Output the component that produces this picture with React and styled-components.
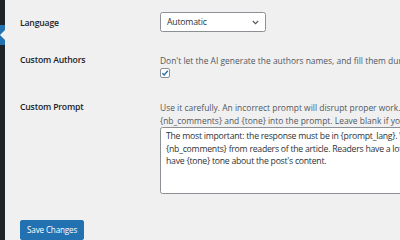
import React from "react";
import styled, { createGlobalStyle } from "styled-components";

const Global = createGlobalStyle`
  html, body { margin: 0; padding: 0; background: #f0f0f1; overflow: hidden; }
  body { width: 400px; height: 240px; font-family: "Open Sans", "Noto Sans", sans-serif; color: #1d2327; }
`;

const Layout = styled.div`
  display: flex;
  width: 400px;
  height: 240px;
  overflow: hidden;
`;

const Sidebar = styled.nav`
  flex: 0 0 5px;
  background: #1d2327;
  display: flex;
  flex-direction: column;
`;

const CurrentItem = styled.div`
  position: relative;
  margin-top: 25px;
  height: 20px;
  background: #2271b1;
  &::after {
    content: "";
    position: absolute;
    right: 0;
    top: 50%;
    margin-top: -5px;
    border: 5px solid transparent;
    border-right-color: #f0f0f1;
    border-left-width: 0;
  }
`;

const Main = styled.main`
  flex: 1;
  min-width: 0;
  padding: 12px 0 0 15px;
  display: flex;
  flex-direction: column;
`;

const Row = styled.div`
  display: grid;
  grid-template-columns: 140px 1fr;
  margin-bottom: ${(p) => p.$gap || 0}px;
`;

const Label = styled.div`
  font-size: 8.7px;
  font-weight: 600;
  letter-spacing: -0.2px;
  line-height: 13px;
  padding-top: ${(p) => p.$top || 0}px;
  white-space: nowrap;
`;

const Field = styled.div`
  display: flex;
  flex-direction: column;
  min-width: 0;
`;

const Select = styled.div`
  box-sizing: border-box;
  width: 106px;
  height: 20px;
  border: 1px solid #8c8f94;
  border-radius: 2.5px;
  background: #fff;
  display: flex;
  align-items: center;
  justify-content: space-between;
  padding: 0 6px 0 6px;
  font-size: 8.7px;
  letter-spacing: -0.2px;
  color: #2c3338;
`;

const Description = styled.p`
  margin: 0;
  font-size: 8.45px;
  line-height: 13px;
  color: #50575e;
  white-space: nowrap;
`;

const Checkbox = styled.span`
  box-sizing: border-box;
  width: 10px;
  height: 10px;
  margin-top: 1px;
  border: 1px solid #8c8f94;
  border-radius: 2px;
  background: #fff;
  display: flex;
  align-items: center;
  justify-content: center;
`;

const TextArea = styled.textarea`
  box-sizing: border-box;
  width: 400px;
  height: 67px;
  margin: 0;
  padding: 2px 5px;
  border: 1px solid #8c8f94;
  border-radius: 2.5px;
  background: #fff;
  font-family: "Open Sans", "Noto Sans", sans-serif;
  font-size: 8.7px;
  letter-spacing: -0.25px;
  line-height: 12.7px;
  color: #2c3338;
  resize: none;
  overflow: hidden;
  white-space: pre;
`;

const SaveButton = styled.button`
  align-self: flex-start;
  box-sizing: border-box;
  height: 20px;
  padding: 0 6px;
  border: 1px solid #2271b1;
  border-radius: 2px;
  background: #2271b1;
  color: #fff;
  font-family: "Open Sans", "Noto Sans", sans-serif;
  font-size: 8.1px;
  letter-spacing: -0.15px;
  line-height: 18px;
`;

const prompt =
  "The most important: the response must be in {prompt_lang}. Write a list of comments numbering\n" +
  "{nb_comments} from readers of the article. Readers have a lot of different opinions and\n" +
  "have {tone} tone about the post's content.";

export default function App() {
  return (
    <>
      <Global />
      <Layout>
        <Sidebar>
          <CurrentItem />
        </Sidebar>
        <Main>
          <Row $gap={22}>
            <Label $top={4.5}>Language</Label>
            <Field>
              <Select>
                <span>Automatic</span>
                <svg width="7" height="5" viewBox="0 0 7 5">
                  <path d="M0.8 1 L3.5 3.7 L6.2 1" fill="none" stroke="#50575e" strokeWidth="1.1" />
                </svg>
              </Select>
            </Field>
          </Row>
          <Row $gap={23}>
            <Label>Custom Authors</Label>
            <Field>
              <Description>Don't let the AI generate the authors names, and fill them during the process.</Description>
              <Checkbox>
                <svg width="8" height="8" viewBox="0 0 8 8">
                  <path d="M1.3 4.2 L3.2 6 L6.8 1.8" fill="none" stroke="#2271b1" strokeWidth="1.4" />
                </svg>
              </Checkbox>
            </Field>
          </Row>
          <Row $gap={26}>
            <Label>Custom Prompt</Label>
            <Field>
              <Description>
                Use it carefully. An incorrect prompt will disrupt proper work. You can use {"{prompt_lang}"},
                <br />
                {"{nb_comments}"} and {"{tone}"} into the prompt. Leave blank if you want to use the default.
              </Description>
              <TextArea readOnly value={prompt} />
            </Field>
          </Row>
          <SaveButton>Save Changes</SaveButton>
        </Main>
      </Layout>
    </>
  );
}
